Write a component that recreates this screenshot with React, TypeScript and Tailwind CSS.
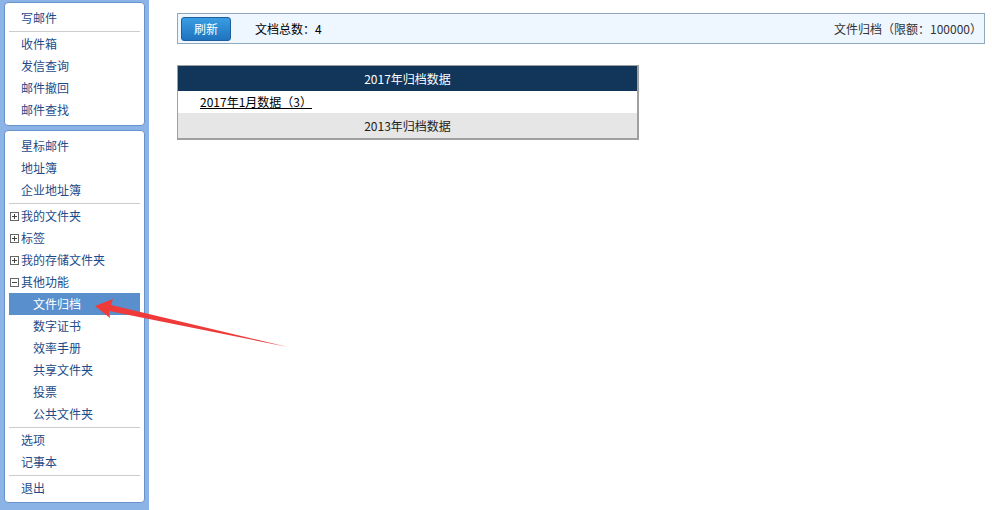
import React from "react";

const FONT = { fontFamily: '"SimSun", "Noto Sans CJK SC", "Liberation Sans", sans-serif' };

function TreeIcon({ open }: { open?: boolean }) {
  return (
    <svg width="9" height="9" viewBox="0 0 9 9" className="mr-[2px] shrink-0">
      <rect x="0.5" y="0.5" width="8" height="8" fill="#fff" stroke="#666" />
      <line x1="2" y1="4.5" x2="7" y2="4.5" stroke="#444" />
      {!open && <line x1="4.5" y1="2" x2="4.5" y2="7" stroke="#444" />}
    </svg>
  );
}

function Row({ children, level = 0, active = false }: { children: React.ReactNode; level?: number; active?: boolean }) {
  const pad = level === 0 ? "pl-[12px]" : level === 1 ? "pl-[1px]" : "pl-[24px]";
  return (
    <div
      className={`mx-[4px] h-[22px] flex items-center text-[12px] ${pad} ${
        active ? "bg-[#5a8fcd] text-white" : "text-[#1c4b88]"
      }`}
    >
      {children}
    </div>
  );
}

function Sep() {
  return <div className="mx-[4px] mt-[2px] mb-[1px] h-px bg-[#cccccc]" />;
}

function Panel({ children, className = "" }: { children: React.ReactNode; className?: string }) {
  return (
    <div className={`bg-white border border-[#6892cb] rounded-[4px] pt-[4px] ${className}`}>{children}</div>
  );
}

export default function App() {
  return (
    <div className="relative w-[992px] h-[510px] flex bg-white overflow-hidden" style={FONT}>
      <div className="w-[149px] h-full bg-[#8bb3e6] pt-[2px] px-[4px] flex flex-col gap-[4px] shrink-0">
        <Panel className="h-[124px]">
          <Row>写邮件</Row>
          <Sep />
          <Row>收件箱</Row>
          <Row>发信查询</Row>
          <Row>邮件撤回</Row>
          <Row>邮件查找</Row>
        </Panel>
        <Panel className="h-[373px]">
          <Row>星标邮件</Row>
          <Row>地址簿</Row>
          <Row>企业地址簿</Row>
          <Sep />
          <Row level={1}>
            <TreeIcon />
            我的文件夹
          </Row>
          <Row level={1}>
            <TreeIcon />
            标签
          </Row>
          <Row level={1}>
            <TreeIcon />
            我的存储文件夹
          </Row>
          <Row level={1}>
            <TreeIcon open />
            其他功能
          </Row>
          <Row level={2} active>
            文件归档
          </Row>
          <Row level={2}>数字证书</Row>
          <Row level={2}>效率手册</Row>
          <Row level={2}>共享文件夹</Row>
          <Row level={2}>投票</Row>
          <Row level={2}>公共文件夹</Row>
          <Sep />
          <Row>选项</Row>
          <Row>记事本</Row>
          <Sep />
          <Row>退出</Row>
        </Panel>
      </div>

      <div className="flex-1 pl-[28px] pr-[7px] pt-[13px]">
        <div className="h-[31px] border border-[#8fa8bb] bg-[#eef6ff] flex items-center pl-[3px] pr-[2px] text-[12px]">
          <button className="w-[50px] h-[24px] rounded-[3px] border border-[#1d5f9c] bg-gradient-to-b from-[#3a9de2] to-[#1f73bf] text-white text-[12px] flex items-center justify-center">
            刷新
          </button>
          <span className="ml-[24px] text-black">文档总数：4</span>
          <span className="ml-auto text-[#333]">文件归档（限额：100000）</span>
        </div>

        <div className="mt-[21px] w-[462px] border border-[#a0a0a0] border-r-2 border-b-2 text-[12px]">
          <div className="h-[25px] bg-[#12355a] text-white flex items-center justify-center">2017年归档数据</div>
          <div className="h-[22px] bg-white flex items-center pl-[22px]">
            <span className="underline text-black cursor-pointer">2017年1月数据（3）</span>
          </div>
          <div className="h-[25px] bg-[#e6e6e6] text-[#222] flex items-center justify-center">2013年归档数据</div>
        </div>
      </div>

      <svg className="absolute left-0 top-0 pointer-events-none" width="992" height="510">
        <polygon
          points="95,306 113,299 111,305 288,347 109,311 110,318"
          fill="#ef3a3a"
        />
      </svg>
    </div>
  );
}
